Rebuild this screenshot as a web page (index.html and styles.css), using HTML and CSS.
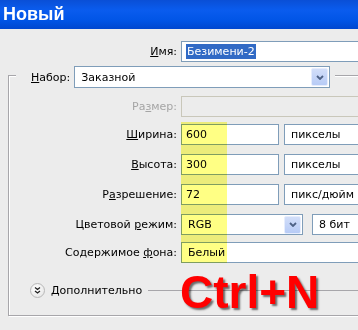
FILE: index.html
```html
<!DOCTYPE html>
<html lang="ru">
<head>
  <meta charset="UTF-8">
  <title>Новый</title>
  <link rel="stylesheet" href="styles.css">
</head>
<body>

<div class="dialog">
  <div class="titlebar">Новый</div>

  <div class="row name-row">
    <label class="lbl"><u>И</u>мя:</label>
    <div class="field wide"><span class="selected">Безимени-2</span></div>
  </div>

  <fieldset class="group">
    <legend class="preset">
      <label><u>Н</u>абор:</label>
      <div class="combo preset-combo">
        <span>Заказной</span>
        <span class="drop"><svg width="8" height="5" viewBox="0 0 8 5"><path d="M1 1 L4 4 L7 1" fill="none" stroke="#4d6185" stroke-width="1.8"/></svg></span>
      </div>
    </legend>

    <div class="rows">
      <div class="row">
        <label class="lbl off">Ра<u>з</u>мер:</label>
        <div class="field wide disabled"></div>
      </div>
      <div class="row close">
        <label class="lbl"><u>Ш</u>ирина:</label>
        <div class="field num">600</div>
        <div class="combo unit">пикселы</div>
      </div>
      <div class="row">
        <label class="lbl"><u>В</u>ысота:</label>
        <div class="field num">300</div>
        <div class="combo unit">пикселы</div>
      </div>
      <div class="row">
        <label class="lbl">Р<u>а</u>зрешение:</label>
        <div class="field num">72</div>
        <div class="combo unit">пикс/дюйм</div>
      </div>
      <div class="row">
        <label class="lbl">Цветовой <u>р</u>ежим:</label>
        <div class="combo mode">
          <span>RGB</span>
          <span class="drop"><svg width="8" height="5" viewBox="0 0 8 5"><path d="M1 1 L4 4 L7 1" fill="none" stroke="#4d6185" stroke-width="1.8"/></svg></span>
        </div>
        <div class="combo bits">8 бит</div>
      </div>
      <div class="row close">
        <label class="lbl">Содержимое <u>ф</u>она:</label>
        <div class="combo wide">Белый</div>
      </div>
    </div>

    <div class="advanced">
      <span class="toggle"><svg width="13" height="13" viewBox="0 0 13 13"><path d="M4 3.5 L6.5 5.5 L9 3.5 M4 7 L6.5 9 L9 7" fill="none" stroke="#222" stroke-width="1.3"/></svg></span>
      <span>Дополнительно</span>
      <span class="rule"></span>
    </div>
  </fieldset>

  <div class="highlight"></div>
  <div class="hotkey">Ctrl+N</div>
</div>

</body>
</html>
```

FILE: styles.css
```css
html, body {
  margin: 0;
  overflow: hidden;
  background: #ececec;
}
body {
  font-family: "DejaVu Sans", sans-serif;
  font-size: 11px;
  color: #000;
}
.dialog {
  position: relative;
  width: 358px;
  height: 330px;
  overflow: hidden;
}
.titlebar {
  height: 29px;
  line-height: 29px;
  padding-left: 3px;
  font-family: "Liberation Sans", sans-serif;
  font-size: 18px;
  font-weight: bold;
  color: #fff;
  background: linear-gradient(to bottom, #0a4fd6, #0a5cee 35%, #0155e6 70%, #0047cf);
}
.row {
  display: flex;
  align-items: center;
  gap: 4px;
}
.lbl {
  flex: none;
  width: 168px;
  text-align: right;
}
.lbl.off {
  color: #a5a5a5;
}
.name-row {
  margin-top: 12px;
  margin-right: -6px;
}
.name-row .lbl {
  width: 177px;
}
.field, .combo {
  box-sizing: border-box;
  height: 21px;
  line-height: 19px;
  border: 1px solid #7f9db9;
  background: #fff;
  white-space: nowrap;
}
.field {
  padding-left: 4px;
}
.combo {
  display: flex;
  align-items: center;
  justify-content: space-between;
  padding-left: 6px;
}
.wide {
  flex: 1;
}
.selected {
  background: #316ac5;
  color: #fff;
  padding: 1px 1px;
}
.field.disabled {
  border-color: #c9c7ba;
  background: #ececec;
}
.group {
  margin: 0 -8px 0 8px;
  padding: 8px 0 17px 0;
  min-width: 0;
  border: 1px solid #a7a6aa;
  box-shadow: 1px 1px 0 #fff, inset 1px 1px 0 #fff;
}
.preset {
  display: flex;
  align-items: center;
  gap: 4px;
  margin-left: 7px;
  padding: 4px 5px 0 15px;
  background: #ececec;
}
.preset-combo {
  width: 256px;
  height: 22px;
}
.drop {
  display: flex;
  align-items: center;
  justify-content: center;
  width: 15px;
  height: 16px;
  margin-right: 1px;
  border: 1px solid #e6edfd;
  border-radius: 2px;
  background: linear-gradient(to bottom, #d2def9, #b7cbf6);
}
.rows {
  display: flex;
  flex-direction: column;
  gap: 9px;
}
.row.close {
  margin-top: -2px;
}
.num {
  width: 98px;
}
.unit {
  flex: 1;
  margin-left: 1px;
}
.mode {
  width: 122px;
}
.bits {
  flex: 1;
  margin-left: 5px;
}
.advanced {
  display: flex;
  align-items: center;
  gap: 6px;
  margin: 20px 0 0 21px;
}
.toggle {
  display: flex;
  align-items: center;
  justify-content: center;
  box-sizing: border-box;
  width: 15px;
  height: 15px;
  border: 1px solid #b8b8b8;
  border-radius: 50%;
  background: radial-gradient(circle at 40% 35%, #fff, #e2e2e2);
}
.rule {
  flex: 1;
  height: 1px;
  background: #a7a6aa;
}
.highlight {
  position: absolute;
  left: 181px;
  top: 122px;
  width: 46px;
  height: 141px;
  background: #ffff84;
  mix-blend-mode: multiply;
}
.hotkey {
  position: absolute;
  left: 180px;
  top: 269px;
  font-family: "Liberation Sans", sans-serif;
  font-size: 46px;
  font-weight: bold;
  line-height: 1;
  color: #ff0000;
  text-shadow: 2px 2px 2px rgba(0, 0, 0, 0.55);
}
```
